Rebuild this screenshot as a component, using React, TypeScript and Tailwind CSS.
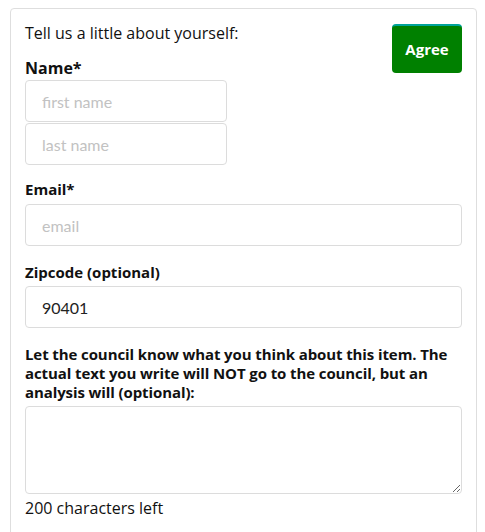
import React, { useState } from 'react';

const inputClass =
  'block h-[42px] rounded-[4px] border border-[#dcdcdc] bg-white px-4 text-[16px] text-[#222] placeholder:text-[#c2c2c2] outline-none';

export default function App() {
  const [comment, setComment] = useState('');
  const left = 200 - comment.length;

  return (
    <div className="min-h-[532px] bg-white pl-[10px] pr-[8px] pt-[8px]" style={{ fontFamily: '"Open Sans", sans-serif' }}>
      <div className="min-h-[540px] rounded-t-[4px] border border-[#dedede] px-[14px] pt-[13px]">
        <div className="flex items-start justify-between">
          <div>
            <p className="text-[16px] leading-[22px] text-[#111]">Tell us a little about yourself:</p>
            <label className="mt-[15px] block text-[16px] font-bold leading-[19px] text-[#111]">Name*</label>
            <input className={`${inputClass} mt-[2px] w-[202px]`} style={{ fontFamily: 'Lato, sans-serif' }} placeholder="first name" />
            <input className={`${inputClass} mt-px w-[202px]`} style={{ fontFamily: 'Lato, sans-serif' }} placeholder="last name" />
          </div>
          <button className="mt-[2px] h-[49px] w-[70px] rounded-[4px] border-t-[2px] border-[#00a39a] bg-[#008000] text-[15px] font-bold text-white">
            Agree
          </button>
        </div>

        <label className="mt-[14px] block text-[15px] font-bold leading-[20px] text-[#111]">Email*</label>
        <input className={`${inputClass} mt-[5px] w-full`} style={{ fontFamily: 'Lato, sans-serif' }} placeholder="email" />

        <label className="mt-[16px] block text-[15px] font-bold leading-[20px] text-[#111]">Zipcode (optional)</label>
        <input className={`${inputClass} mt-[4px] w-full`} style={{ fontFamily: 'Lato, sans-serif' }} defaultValue="90401" />

        <label className="mt-[17px] block text-[15px] font-bold leading-[19px] tracking-[-0.1px] text-[#111]">
          Let the council know what you think about this item. The actual text you write will NOT go to the council, but an analysis will (optional):
        </label>
        <textarea
          className="mt-[4px] block h-[88px] w-full rounded-[4px] border border-[#dcdcdc] px-3 py-2 text-[15px] outline-none"
          value={comment}
          maxLength={200}
          onChange={(e) => setComment(e.target.value)}
        />
        <p className="mt-[3px] text-[16px] leading-[22px] text-[#111]">{left} characters left</p>
      </div>
    </div>
  );
}
